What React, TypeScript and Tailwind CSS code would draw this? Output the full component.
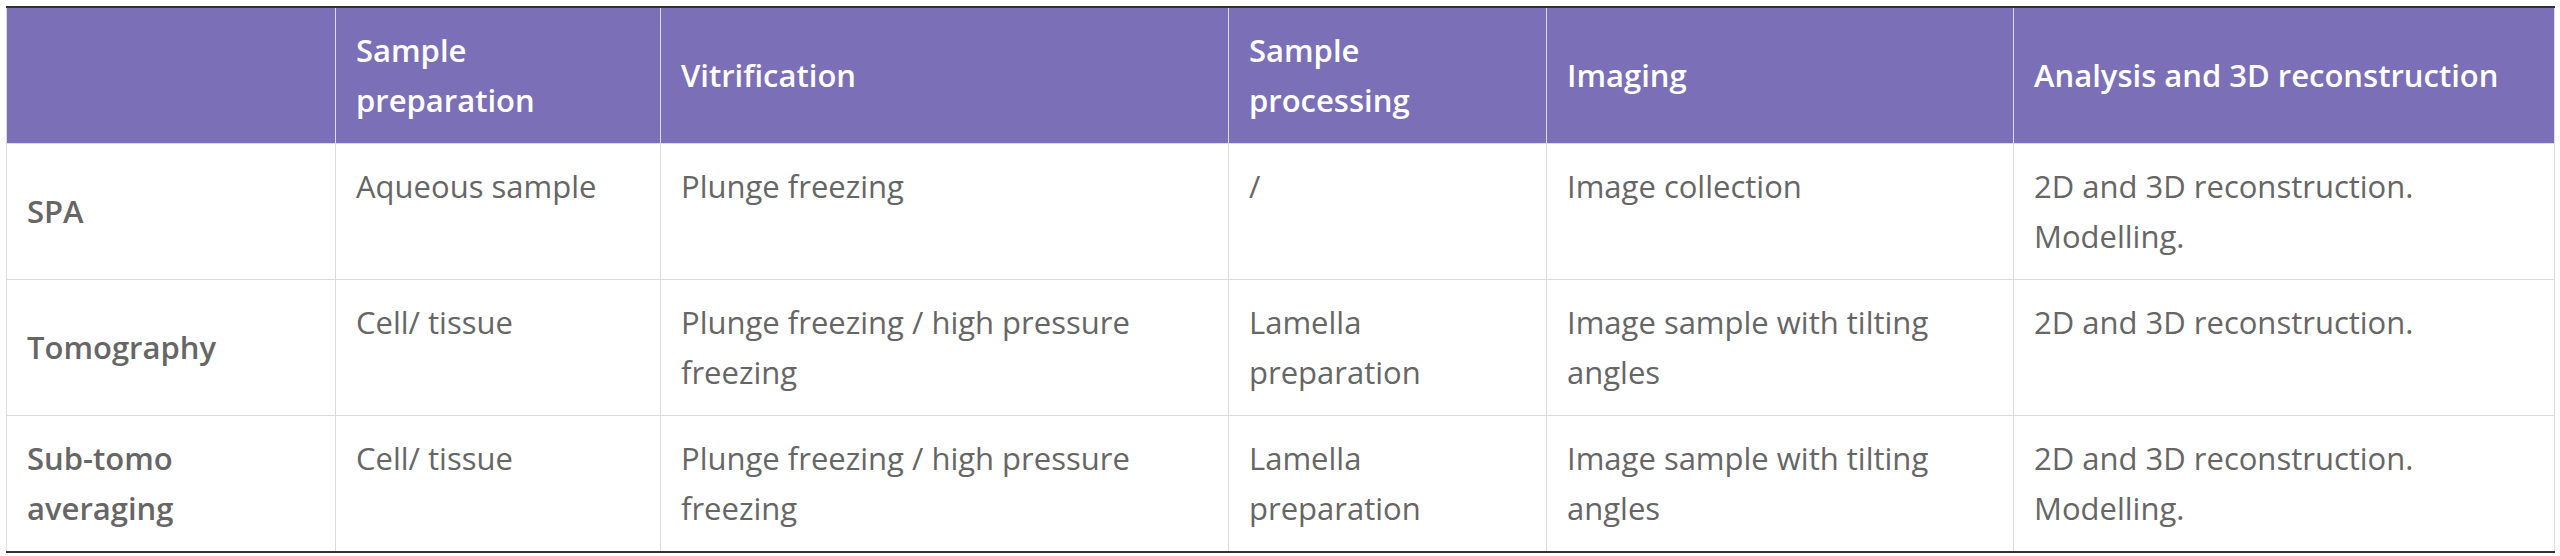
const columns = [
  { label: "", width: "w-[329px]" },
  { label: "Sample preparation", width: "w-[325px]" },
  { label: "Vitrification", width: "w-[568px]" },
  { label: "Sample processing", width: "w-[318px]" },
  { label: "Imaging", width: "w-[467px]" },
  { label: "Analysis and 3D reconstruction", width: "w-[541px]" },
];

const rows = [
  {
    method: "SPA",
    cells: [
      "Aqueous sample",
      "Plunge freezing",
      "/",
      "Image collection",
      "2D and 3D reconstruction. Modelling.",
    ],
  },
  {
    method: "Tomography",
    cells: [
      "Cell/ tissue",
      "Plunge freezing / high pressure freezing",
      "Lamella preparation",
      "Image sample with tilting angles",
      "2D and 3D reconstruction.",
    ],
  },
  {
    method: "Sub-tomo averaging",
    cells: [
      "Cell/ tissue",
      "Plunge freezing / high pressure freezing",
      "Lamella preparation",
      "Image sample with tilting angles",
      "2D and 3D reconstruction. Modelling.",
    ],
  },
];

export default function App() {
  return (
    <div
      className="bg-white w-[2560px] h-[556px] pt-[6px] px-[6px]"
      style={{ fontFamily: '"Open Sans", "Noto Sans", sans-serif' }}
    >
      <table className="w-[2548px] table-fixed border-collapse border-t-2 border-b-2 border-t-[#333] border-b-[#333] text-[31px] leading-[50px]">
        <thead>
          <tr className="bg-[#7b70b8] text-white">
            {columns.map((col, i) => (
              <th
                key={i}
                className={`${col.width} border border-[#dcdcdc] border-t-[#333] px-[20px] pt-[17px] pb-[18px] text-left align-middle font-semibold`}
              >
                {col.label}
              </th>
            ))}
          </tr>
        </thead>
        <tbody>
          {rows.map((row) => (
            <tr key={row.method}>
              <th className="border border-[#dcdcdc] px-[20px] pt-[17px] pb-[18px] text-left align-middle font-semibold text-[#666]">
                {row.method}
              </th>
              {row.cells.map((cell, i) => (
                <td
                  key={i}
                  className="border border-[#dcdcdc] px-[20px] pt-[17px] pb-[18px] align-top text-[#666]"
                >
                  {cell}
                </td>
              ))}
            </tr>
          ))}
        </tbody>
      </table>
    </div>
  );
}
